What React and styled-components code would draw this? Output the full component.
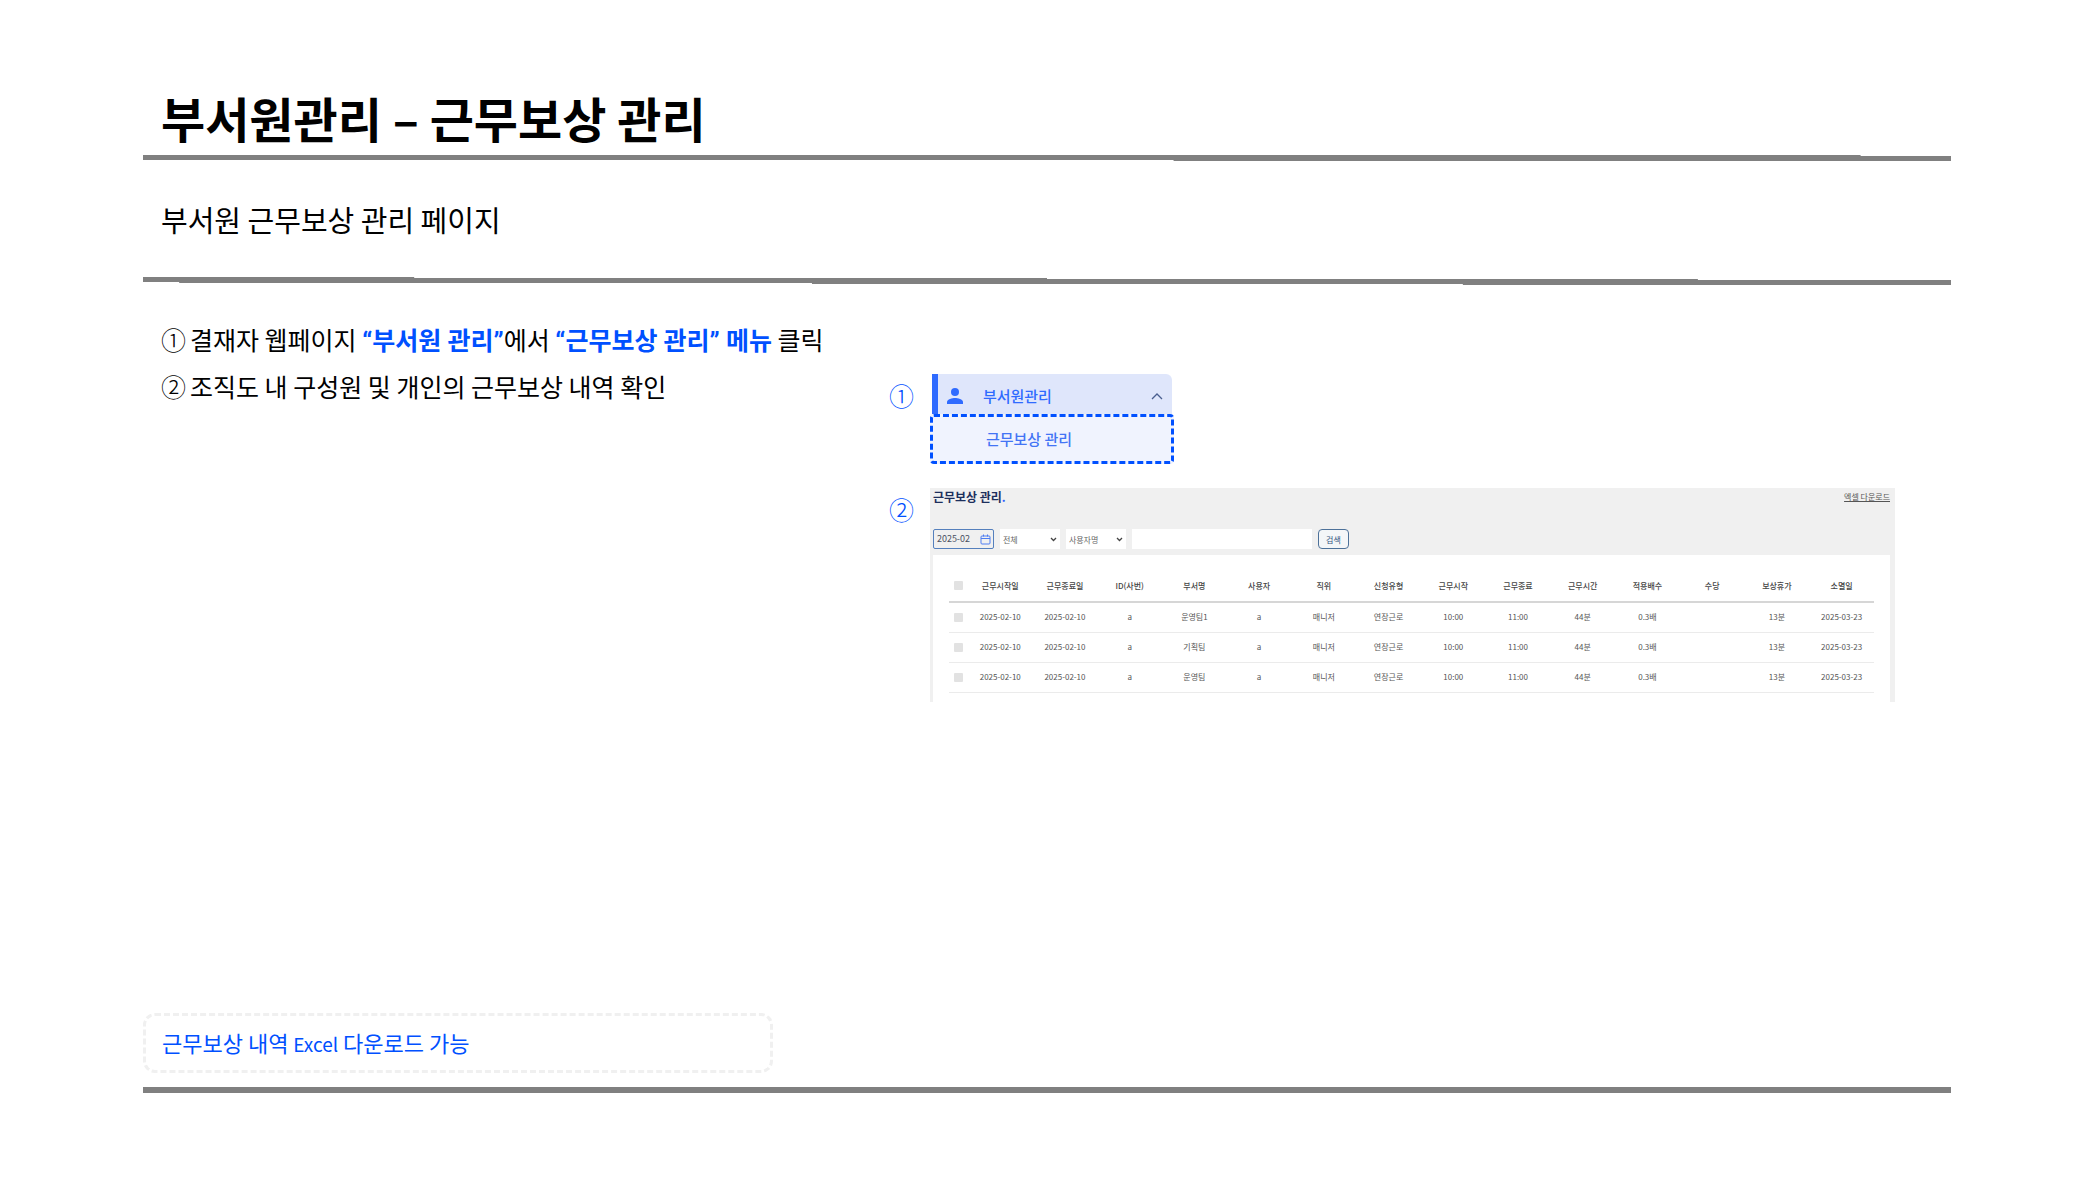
import React, { useState } from "react";
import styled, { createGlobalStyle } from "styled-components";

const columns = [
  { key: "startDate", name: "근무시작일" },
  { key: "endDate", name: "근무종료일" },
  { key: "id", name: "ID(사번)" },
  { key: "team", name: "부서명" },
  { key: "user", name: "사용자" },
  { key: "position", name: "직위" },
  { key: "type", name: "신청유형" },
  { key: "startTime", name: "근무시작" },
  { key: "endTime", name: "근무종료" },
  { key: "workTime", name: "근무시간" },
  { key: "rate", name: "적용배수" },
  { key: "pay", name: "수당" },
  { key: "dayOff", name: "보상휴가" },
  { key: "expire", name: "소멸일" },
];

const common = {
  startDate: "2025-02-10",
  endDate: "2025-02-10",
  id: "a",
  user: "a",
  position: "매니저",
  type: "연장근로",
  startTime: "10:00",
  endTime: "11:00",
  workTime: "44분",
  rate: "0.3배",
  pay: "",
  dayOff: "13분",
  expire: "2025-03-23",
};

const data = [
  { ...common, team: "운영팀1" },
  { ...common, team: "기획팀" },
  { ...common, team: "운영팀" },
];

function SideMenu() {
  return (
    <Menu>
      <MenuHeader type="button">
        <svg width="16" height="16" viewBox="0 0 16 16" fill="#2f6bff">
          <circle cx="8" cy="4" r="4" />
          <path d="M0 16v-2c0-2.700 5.300-4 8-4s8 1.300 8 4v2z" />
        </svg>
        <MenuName>부서원관리</MenuName>
        <svg width="12" height="7" viewBox="0 0 12 7" fill="none">
          <path d="M1 6l5-5 5 5" stroke="#4a5f8f" strokeWidth="1.300" />
        </svg>
      </MenuHeader>
      <SubMenu href="#reward">근무보상 관리</SubMenu>
    </Menu>
  );
}

function SearchBar() {
  const [month, setMonth] = useState("2025-02");
  const [keyword, setKeyword] = useState("");

  return (
    <Filters>
      <DateBox>
        <DateInput
          aria-label="조회월"
          value={month}
          onChange={(e) => setMonth(e.target.value)}
        />
        <svg width="11" height="11" viewBox="0 0 11 11" fill="none">
          <rect x="1" y="2" width="9" height="8" rx="1" stroke="#4d7df2" />
          <path d="M1 4.500h9M3.500 0.500v2M7.500 0.500v2" stroke="#4d7df2" />
        </svg>
      </DateBox>
      <SelectBox>
        <Select aria-label="구분">
          <option>전체</option>
        </Select>
        <SelectArrow />
      </SelectBox>
      <SelectBox>
        <Select aria-label="검색조건">
          <option>사용자명</option>
        </Select>
        <SelectArrow />
      </SelectBox>
      <KeywordInput
        aria-label="검색어"
        value={keyword}
        onChange={(e) => setKeyword(e.target.value)}
      />
      <SearchButton type="button">검색</SearchButton>
    </Filters>
  );
}

function SelectArrow() {
  return (
    <svg width="7" height="5" viewBox="0 0 7 5" fill="none">
      <path d="M1 1l2.500 2.500L6 1" stroke="#444" strokeWidth="1.300" />
    </svg>
  );
}

function RewardTable() {
  return (
    <TableBox>
      <Table>
        <colgroup>
          <CheckCol />
        </colgroup>
        <thead>
          <tr>
            <Th>
              <Check type="checkbox" aria-label="전체 선택" />
            </Th>
            {columns.map((col) => (
              <Th key={col.key}>{col.name}</Th>
            ))}
          </tr>
        </thead>
        <tbody>
          {data.map((item) => (
            <tr key={item.team}>
              <Td>
                <Check type="checkbox" aria-label={item.team} />
              </Td>
              {columns.map((col) => (
                <Td key={col.key}>{item[col.key]}</Td>
              ))}
            </tr>
          ))}
        </tbody>
      </Table>
    </TableBox>
  );
}

function App() {
  return (
    <>
      <GlobalStyle />
      <Page>
        <Title>부서원관리 – 근무보상 관리</Title>
        <Rule $thick={5} $top={[95]} $bottom={[57]} />
        <Description>부서원 근무보상 관리 페이지</Description>
        <Rule $thick={5} $top={[15, 50, 86]} $bottom={[2, 37, 73]} />

        <Content>
          <Steps>
            <Step>
              <StepNumber>①</StepNumber>
              <span>
                결재자 웹페이지 <Strong>“부서원 관리”</Strong>에서{" "}
                <Strong>“근무보상 관리” 메뉴</Strong> 클릭
              </span>
            </Step>
            <Step>
              <StepNumber>②</StepNumber>
              <span>조직도 내 구성원 및 개인의 근무보상 내역 확인</span>
            </Step>
          </Steps>

          <Figures>
            <Marker>①</Marker>
            <SideMenu />
            <Marker>②</Marker>
            <Panel>
              <PanelHeader>
                <PanelTitle>
                  근무보상 관리<Dot>.</Dot>
                </PanelTitle>
                <ExcelLink href="#excel">엑셀 다운로드</ExcelLink>
              </PanelHeader>
              <SearchBar />
              <RewardTable />
            </Panel>
          </Figures>
        </Content>

        <Note>
          근무보상 내역 <Latin>Excel</Latin> 다운로드 가능
        </Note>
        <Rule $thick={6} $top={[]} $bottom={[]} />
      </Page>
    </>
  );
}

const GlobalStyle = createGlobalStyle`
  * {
    box-sizing: border-box;
  }

  body {
    margin: 0;
    background-color: #fff;
    color: #000;
    font-family: "Noto Sans CJK KR", "Noto Sans", sans-serif;
  }

  input, select, button {
    font-family: inherit;
    margin: 0;
  }
`;

const Page = styled.div`
  min-height: 100vh;
  display: flex;
  flex-direction: column;
  padding: 84px 143px 85px;
`;

const Title = styled.h1`
  margin: 0;
  padding: 0 18px;
  height: 71px;
  font-size: 48px;
  line-height: 66px;
  font-weight: 700;
`;

/* 오른쪽으로 갈수록 1px씩 내려가는 구분선 */
const stairs = ({ $thick, $top, $bottom }) => {
  const top = $top.flatMap((x, i) => [`${x}% ${i}px`, `${x}% ${i + 1}px`]);
  const bottom = $bottom
    .flatMap((x, i) => [
      `${x}% ${$thick + i}px`,
      `${x}% ${$thick + i + 1}px`,
    ])
    .reverse();
  return [
    "0 0",
    ...top,
    `100% ${$top.length}px`,
    "100% 100%",
    ...bottom,
    `0 ${$thick}px`,
  ].join(", ");
};

const Rule = styled.hr`
  width: 100%;
  margin: 0;
  border: none;
  flex-shrink: 0;
  height: ${({ $thick, $top }) => $thick + $top.length}px;
  background-color: #808080;
  clip-path: polygon(${stairs});
`;

const Description = styled.p`
  margin: 0;
  padding: 38px 18px 38px;
  font-size: 29px;
  line-height: 40px;
`;

const Content = styled.main`
  flex: 1;
  display: grid;
  grid-template-columns: 43fr 58fr;
  padding: 31px 56px 32px 0;
`;

const Steps = styled.ol`
  margin: 0;
  padding: 0 0 0 18px;
  list-style: none;
`;

const Step = styled.li`
  display: flex;
  gap: 4px;
  font-size: 25px;
  line-height: 47px;
`;

const StepNumber = styled.span`
  font-weight: 300;
`;

const Strong = styled.strong`
  color: #0050ff;
  font-family: Roboto, "Noto Sans CJK KR", sans-serif;
  font-weight: 700;
  line-height: 1;
`;

const Figures = styled.div`
  display: grid;
  grid-template-columns: 41px 1fr;
  grid-template-rows: auto auto;
  align-content: start;
  row-gap: 24px;
  padding-top: 58px;
`;

const Marker = styled.span`
  padding-top: 3px;
  color: #0050ff;
  font-size: 25px;
  line-height: 36px;
  font-weight: 300;
`;

const Menu = styled.nav`
  width: 244px;
`;

const MenuHeader = styled.button`
  display: flex;
  align-items: center;
  gap: 20px;
  width: 240px;
  height: 40px;
  margin-left: 2px;
  padding: 4px 9px 0;
  border: none;
  border-left: 6px solid #2f6bff;
  border-top-right-radius: 6px;
  background-color: #dfe6fb;
`;

const MenuName = styled.span`
  flex: 1;
  color: #2f6bff;
  font-size: 15px;
  line-height: 20px;
  font-weight: 500;
  text-align: left;
`;

const SubMenu = styled.a`
  display: block;
  padding: 12px 53px;
  border: 3px dashed #0050ff;
  border-radius: 4px;
  background-color: #f0f3fe;
  color: #4374f5;
  font-size: 15px;
  line-height: 20px;
  font-weight: 500;
  text-decoration: none;
`;

const Panel = styled.section`
  padding: 0 5px 0 3px;
  background-color: #f0f0f0;
`;

const PanelHeader = styled.div`
  display: flex;
  justify-content: space-between;
  height: 41px;
`;

const PanelTitle = styled.h2`
  margin: 0;
  color: #1d2f5c;
  font-size: 12px;
  line-height: 18px;
  font-weight: 700;
`;

const Dot = styled.span`
  color: #2f5fff;
`;

const ExcelLink = styled.a`
  color: #555;
  font-size: 8px;
  line-height: 18px;
`;

const Filters = styled.div`
  display: flex;
  gap: 6px;
  height: 26px;
`;

const DateBox = styled.div`
  display: flex;
  align-items: center;
  width: 61px;
  height: 20px;
  padding: 0 2px 0 3px;
  border: 1px solid #5580bd;
  border-radius: 2px;
`;

const DateInput = styled.input`
  flex: 1;
  min-width: 0;
  padding: 0;
  border: none;
  background: none;
  color: #4a5262;
  font-size: 9px;
  line-height: 16px;
`;

const SelectBox = styled.div`
  display: grid;
  align-items: center;
  width: 60px;
  height: 20px;
  background-color: #fff;

  & > * {
    grid-area: 1 / 1;
  }

  & > svg {
    justify-self: end;
    margin-right: 3px;
    pointer-events: none;
  }
`;

const Select = styled.select`
  appearance: none;
  width: 100%;
  height: 20px;
  padding: 0 3px;
  border: none;
  border-radius: 0;
  background: none;
  color: #666;
  font-size: 8px;
`;

const KeywordInput = styled.input`
  width: 180px;
  height: 20px;
  padding: 0 4px;
  border: none;
  background-color: #fff;
  font-size: 8px;
`;

const SearchButton = styled.button`
  width: 31px;
  height: 20px;
  padding: 0;
  border: 1px solid #4d7199;
  border-radius: 4px;
  background-color: #f4f6f8;
  color: #33557f;
  font-size: 8px;
`;

const TableBox = styled.div`
  padding: 15px 16px 9px;
  background-color: #fff;
`;

const Table = styled.table`
  width: 100%;
  table-layout: fixed;
  border-collapse: collapse;
  color: #555;
  font-size: 8px;
  line-height: 12px;
  text-align: center;
`;

const CheckCol = styled.col`
  width: 19px;
`;

const Th = styled.th`
  height: 32px;
  padding: 0;
  border-bottom: 2px solid #d6d6d6;
  color: #444;
  font-weight: 500;
  white-space: nowrap;
`;

const Td = styled.td`
  height: 30px;
  padding: 0;
  border-bottom: 1px solid #ebebeb;
  white-space: nowrap;
`;

const Check = styled.input`
  appearance: none;
  display: block;
  width: 9px;
  height: 9px;
  margin: 0 auto;
  border-radius: 1px;
  background-color: #e2e2e2;
`;

const Note = styled.p`
  width: 630px;
  max-width: 100%;
  margin: 0 0 14px;
  padding: 11px 16px 13px;
  border: 3px dashed #f0f0f0;
  border-radius: 12px;
  color: #0050ff;
  font-size: 22px;
  line-height: 30px;
`;

const Latin = styled.span`
  font-size: 19px;
  line-height: 1;
`;

export default App;
